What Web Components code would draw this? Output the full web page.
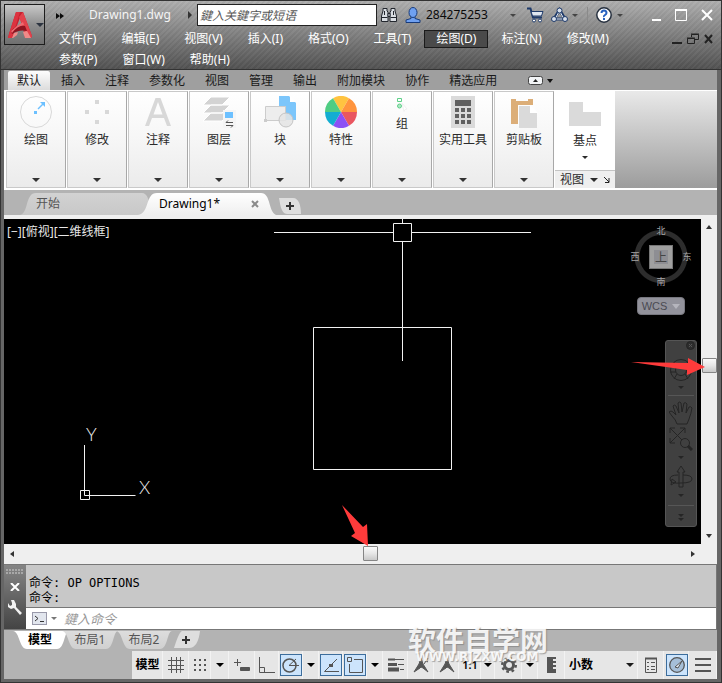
<!DOCTYPE html>
<html lang="zh-CN">
<head>
<meta charset="utf-8">
<title>Drawing1.dwg</title>
<style>
  html, body { margin: 0; height: 100%; background: #666; }
  body { font: 12px/16px "Noto Sans", "Noto Sans CJK SC", sans-serif; color: #1a1a1a; }
</style>
</head>
<body>
<cad-window></cad-window>
<script>
const RESET = `
  * { box-sizing: border-box; }
  button { font: inherit; color: inherit; background: none; border: 0; padding: 0; margin: 0; display: inline-flex; align-items: center; justify-content: center; }
  svg { display: block; flex: none; }
  .arrow { width: 0; height: 0; border: 4px solid transparent; border-top-color: currentColor; border-bottom: 0; }
`;

function define(name, css, html) {
  customElements.define(name, class extends HTMLElement {
    constructor() {
      super();
      const template = document.createElement('template');
      template.innerHTML = `<style>${RESET}${css}</style>${typeof html === 'function' ? html(this) : html}`;
      this.attachShadow({ mode: 'open' }).append(template.content.cloneNode(true));
    }
  });
}

/* ---------- title bar ---------- */
define('app-button', `
  :host { display: block; }
  button { width: 41px; height: 41px; border: 1px solid #1d1d1d; background: linear-gradient(#c8c8c8, #8f8f8f 50%, #6f6f6f); justify-content: flex-start; padding-left: 3px; gap: 3px; }
  .arrow { color: #2d3440; }
`, `<button aria-label="应用程序菜单">
  <svg width="25" height="28" viewBox="0 0 25 28">
    <path d="M8 1h7l9 24-1 2h-6l-1-6-4-14L6 22 4 27H0L1 23Z" fill="#c8202f"/>
    <path d="M8 1h4L4 27H0L1 23Z" fill="#dd3340"/>
    <path d="M15 1l9 24-1 2h-4L11 6Z" fill="#e2424c"/>
    <path d="M3 20q6-7 14-5l2 5q-8-2-15 3Z" fill="#8e1420"/>
    <path d="M3 20q5-5 12-9l1 3q-7 1-12 8Z" fill="#ef6a70"/>
    <path d="M4 27l2-5 4-1-1 3-4 3Zm13 0-2-6 4-1 4 7Z" fill="#f08a88"/>
  </svg><span class="arrow"></span></button>`);

define('quick-bar', `
  :host { display: flex; align-items: center; height: 22px; min-width: 0; color: #f4f4f4; }
  .more { width: 18px; margin: 2px 20px 0 4px; }
  h1 { font: 12px/20px "Noto Sans", sans-serif; margin: 0 auto 0 0; white-space: nowrap; }
  .search { display: flex; align-items: center; gap: 5px; }
  input { width: 180px; height: 22px; border: 1px solid #222; background: #fff; font: italic 12px/18px "Noto Sans", "Noto Sans CJK SC", sans-serif; padding: 0 2px; border-radius: 0; outline: 0; }
  input::placeholder { color: #555; opacity: 1; }
  .icon { width: 16px; height: 20px; }
  .find { margin-left: 4px; }
  .user { color: #0a0a0a; gap: 5px; margin: 0 11px 0 8px; width: 111px; justify-content: flex-start; }
  .user .arrow { margin-left: auto; }
  .arrow { border-width: 3px 3px 0; color: #444; }
  .group { display: flex; align-items: center; margin-left: 8px; }
  .drop { width: 15px; height: 20px; }
  .line { width: 1px; height: 16px; background: #8a8a8a; margin: 0 8px 0 5px; }
  .win { display: flex; gap: 13px; margin: 0 4px 0 25px; }
  .win button { width: 13px; height: 18px; }
  .win button:first-child { width: 9px; }
`, `<button class="more" aria-label="快速访问工具栏"><svg width="8" height="6"><path d="M0 0l4 3-4 3ZM4 0l4 3-4 3Z" fill="#0a0a0a"/></svg></button>
  <h1>Drawing1.dwg</h1>
  <div class="search"><svg width="4" height="8"><path d="M0 0l4 4-4 4Z" fill="#333"/></svg><input aria-label="搜索" placeholder="鍵入关鍵字或短语"></div>
  <button class="icon find" aria-label="查找"><svg width="16" height="16" viewBox="0 0 16 16" fill="#d9dde2" stroke="#23272e"><path d="M2 4V1.500h4V4l1 1v9.500H.5V9ZM14 4V1.500h-4V4L9 5v9.500h6.500V9Z"/><path d="M7 6.500h2v3H7ZM1 10.500h5.500M9.500 10.500h5.500M3.500 4v4M12.500 4v4"/></svg></button>
  <button class="user"><svg width="16" height="16" viewBox="0 0 16 16" fill="#6fa0f0" stroke="#173a7a"><path d="M6 9.500h4v2l5 1.500v2.500H1V13l5-1.500Z"/><ellipse cx="8" cy="5.500" rx="4" ry="5"/></svg><span>284275253</span><span class="arrow"></span></button>
  <button class="icon" aria-label="购物车"><svg width="17" height="16" viewBox="0 0 17 16" fill="none" stroke="#1e3a6a"><path d="M0 1.500h3.500l2.500 9h9" stroke-width="2"/><path d="M4 4.500h12l-1.500 4.500H5.500Z" fill="#dfe6f0"/><circle cx="7" cy="13.500" r="1.500" fill="#fff"/><circle cx="13" cy="13.500" r="1.500" fill="#fff"/></svg></button>
  <div class="group"><button class="icon" aria-label="共享"><svg width="17" height="16" viewBox="0 0 17 16" fill="#d8e0ec" stroke="#1e3a6a"><path d="M8.500 3 3 12h11Z" fill="none" stroke-width="3"/><path d="M8.500 4 4 12h9Z" fill="none" stroke="#e7ecf4"/><circle cx="8.500" cy="3.500" r="2.500"/><circle cx="3" cy="12" r="2.500"/><circle cx="14" cy="12" r="2.500"/></svg></button><button class="drop" aria-label="共享选项"><span class="arrow"></span></button><span class="line"></span><button class="icon" aria-label="帮助"><svg width="16" height="16" viewBox="0 0 16 16"><circle cx="8" cy="8" r="7.200" fill="#fff" stroke="#26303f" stroke-width="1.500"/><path d="M5.500 6q0-2.500 2.500-2.500T10.500 6q0 1-1.500 2T8 10M8 11v2" fill="none" stroke="#2862c0" stroke-width="2"/></svg></button><button class="drop" aria-label="帮助选项"><span class="arrow"></span></button></div>
  <div class="win"><button aria-label="最小化"><svg width="9" height="12"><path d="M0 10h9v2H0Z" fill="#fff"/></svg></button><button aria-label="最大化"><svg width="12" height="12"><path d="M.5 1h11v10.500H.5Z" fill="none" stroke="#fff"/><path d="M0 0h12v2H0Z" fill="#fff"/></svg></button><button aria-label="关闭"><svg width="12" height="12"><path d="M1 1l10 10M11 1 1 11" stroke="#fff" stroke-width="2"/></svg></button></div>`);

define('menu-bar', `
  :host { display: flex; align-items: flex-start; min-width: 0; color: #fff; }
  nav { display: flex; flex-wrap: wrap; flex: 1; gap: 3px 1px; padding-top: 2px; }
  nav button { height: 18px; padding: 0 11px; border: 1px solid transparent; white-space: nowrap; }
  nav button[aria-current] { background: #4a4a4a; border-color: #1b1b1b; }
  .mdi { display: flex; gap: 5px; padding: 4px 4px 0 0; }
  .mdi button { height: 14px; }
`, `<nav aria-label="菜单">${['文件(F)','编辑(E)','视图(V)','插入(I)','格式(O)','工具(T)','绘图(D)','标注(N)','修改(M)','参数(P)','窗口(W)','帮助(H)'].map(t => `<button${t[0] === '绘' ? ' aria-current="true"' : ''}>${t}</button>`).join('')}</nav>
  <div class="mdi"><button aria-label="最小化图形"><svg width="10" height="12"><path d="M0 9h10v2H0Z" fill="#222"/></svg></button><button aria-label="还原图形"><svg width="12" height="12" fill="none" stroke="#222"><path d="M4.500 4V1.500h7v5H8M4 1h8M.5 5.500h7v5h-7ZM0 5h8"/></svg></button><button aria-label="关闭图形"><svg width="9" height="12"><path d="M1 2l7 8M8 2 1 10" stroke="#222" stroke-width="2"/></svg></button></div>`);

define('title-bar', `
  :host { display: grid; grid-template-columns: 41px minmax(0, 1fr); column-gap: 2px; padding: 4px 4px 0 3px; min-height: 70px; border-bottom: 1px solid #333;
    background: linear-gradient(#333 0 1px, transparent 1px), repeating-linear-gradient(135deg, #ffffff08 0 2px, #00000008 2px 4px), linear-gradient(#b0b0b0, #808080 50%, #525252); }
  menu-bar { margin-top: 2px; }
`, `<app-button></app-button><div><quick-bar></quick-bar><menu-bar></menu-bar></div>`);

/* ---------- ribbon ---------- */
define('ribbon-tabs', `
  :host { display: flex; height: 20px; background: #9f9f9f; padding: 1px 0 0 4px; }
  button { padding: 0 10px; white-space: nowrap; height: 19px; }
  button[aria-selected=true] { background: linear-gradient(#fdfdfd, #dcdcdc); border-radius: 2px 2px 0 0; margin-right: 1px; padding: 0 9px; }
  .fold { margin-left: 21px; padding: 0; gap: 4px; color: #111; }
  .arrow { border-width: 4px 3px 0; }
`, `${['默认','插入','注释','参数化','视图','管理','输出','附加模块','协作','精选应用'].map((t, i) => `<button role="tab" aria-selected="${i === 0}">${t}</button>`).join('')}
  <button class="fold" aria-label="最小化功能区"><svg width="15" height="9"><rect x=".5" y=".5" width="14" height="8" rx="2" fill="#f2f4f6" stroke="#444"/><path d="M5 6l2.500-3L10 6Z" fill="#222"/></svg><span class="arrow"></span></button>`);

define('ribbon-panel', `
  :host { display: block; width: 60px; flex: none; }
  button { width: 100%; height: 97px; flex-direction: column; justify-content: flex-start; padding: 4px 0 5px; border: 1px solid #c9c9c9; border-right-color: #a8a8a8; background: linear-gradient(#fff, #f6f6f6 50%, #ebebeb); color: #2b2b2b; }
  .label { margin-top: 3px; white-space: nowrap; line-height: 18px; }
  .arrow { margin-top: auto; color: #333; }
`, el => `<button><slot></slot><span class="label">${el.getAttribute('label')}</span><span class="arrow"></span></button>`);

define('base-panel', `
  :host { display: flex; flex-direction: column; width: 60px; height: 97px; background: #fff; color: #2b2b2b; }
  .main { flex: 1; flex-direction: column; gap: 6px; }
  .main .arrow { border-width: 3px 3px 0; }
  .main .label { line-height: 18px; }
  .foot { height: 18px; background: #efefef; border-top: 1px solid #c4c4c4; justify-content: flex-start; padding-left: 5px; gap: 6px; }
`, `<button class="main"><svg width="32" height="24"><path d="M0 0h14v10h18v14H0Z" fill="#dadada"/></svg><span class="label">基点</span><span class="arrow"></span></button>
  <button class="foot"><span>视图</span><span class="arrow"></span><svg width="6" height="6"><path d="M0 0l5 5M5 1v4.500H1" stroke="#222" fill="none" /></svg></button>`);

define('ribbon-bar', `
  :host { display: flex; gap: 1px; height: 100px; padding: 1px 0 0 2px; background: #fff; overflow: hidden; }
  .rest { flex: 1; height: 97px; margin-left: -1px; background: linear-gradient(#e9e9e9, #9c9c9c); }
`, `
  <ribbon-panel label="绘图"><svg width="32" height="32"><circle cx="16" cy="16" r="15.500" fill="none" stroke="#d8d8d8"/><path d="M14 15h3v3h-3Z" fill="#6cc0ff"/><path d="M25 6v5l-5-5Z" fill="#6cc0ff"/><path d="M18 13l5-5" stroke="#6cc0ff" stroke-width="1.500"/></svg></ribbon-panel>
  <ribbon-panel label="修改"><svg width="32" height="32" fill="#d8d8d8"><path d="M14 4h4v4h-4ZM4 14h4v4H4ZM24 14h4v4h-4ZM14 24h4v4h-4Z"/></svg></ribbon-panel>
  <ribbon-panel label="注释"><svg width="32" height="32"><path d="M3 30 13.500 2h5L29 30h-4l-3-8H10l-3 8ZM11.500 18.500h9L16 6Z" fill="#d8d8d8" fill-rule="evenodd"/></svg></ribbon-panel>
  <ribbon-panel label="图层"><svg width="34" height="32"><path d="M9 1h19l-8 8H1ZM9 9h19l-8 8H1ZM9 17h19l-8 8H1Z" fill="#d3d3d3" stroke="#fff"/><rect x="21" y="14" width="13" height="18" fill="#f5f5f5"/><path d="M23 16h8v6h-8Z" fill="#6cc0ff"/><path d="M24 26.500h7M24 26.500l2-2M31 29.500h-7M31 29.500l-2 2" stroke="#555" fill="none"/></svg></ribbon-panel>
  <ribbon-panel label="块"><svg width="32" height="32"><path d="M15 0h10l7 7v17H15Z" fill="#7cc6fb"/><path d="M26 0v6h6Z" fill="#fff"/><path d="M1.500 10.500h20v14h-20Z" fill="#ededed" stroke="#ccc"/><circle cx="22" cy="24" r="7" fill="#e4e4e4" fill-opacity=".85" stroke="#c4c4c4"/><path d="M0 23h3v3H0Z" fill="#ccc"/></svg></ribbon-panel>
  <ribbon-panel label="特性"><svg width="32" height="32" viewBox="-16 -16 32 32"><path d="M0 0-8-13.860A16 16 0 0 1 8-13.860Z" fill="#ffc340"/><path d="M0 0 8-13.860A16 16 0 0 1 16 0Z" fill="#ff943d"/><path d="M0 0H16A16 16 0 0 1 8 13.860Z" fill="#e95660"/><path d="M0 0 8 13.860A16 16 0 0 1-8 13.860Z" fill="#8b50f5"/><path d="M0 0-8 13.860A16 16 0 0 1-16 0Z" fill="#13add1"/><path d="M0 0H-16A16 16 0 0 1-8-13.860Z" fill="#4fcd83"/></svg></ribbon-panel>
  <ribbon-panel label="组"><svg width="16" height="16" fill="none" stroke="#5fd089" stroke-width="1"><path d="M3.500 2.500h4v3h-4Z"/><circle cx="5.500" cy="10" r="2" fill="#aee8c4"/><path d="M8 7l5 6-2 .5-1 2Z" fill="#fff" stroke="#f0f0f0"/></svg></ribbon-panel>
  <ribbon-panel label="实用工具"><svg width="24" height="32"><path d="M0 0h24v32H0Z" fill="#dadada"/><path d="M4 4h16v6H4ZM4 12h4v4H4ZM10 12h4v4h-4ZM16 12h4v4h-4ZM4 18h4v4H4ZM10 18h4v4h-4ZM16 18h4v4h-4ZM4 24h4v4H4ZM10 24h4v4h-4ZM16 24h4v4h-4Z" fill="#606060"/></svg></ribbon-panel>
  <ribbon-panel label="剪贴板"><svg width="27" height="32"><path d="M0 3h22v25H0Z" fill="#dcae78"/><path d="M7 9h17v21H7ZM5 3h12v2H5ZM8 1h6v3H8Z" fill="#fdfdfd"/><path d="M8 10h11l7 7v15H8Z" fill="#dadada"/><path d="M19 9v8h8Z" fill="#fff"/></svg></ribbon-panel>
  <base-panel></base-panel><div class="rest"></div>`);

/* ---------- file tabs ---------- */
define('file-tabs', `
  :host { display: flex; align-items: flex-end; height: 29px; padding: 0 0 4px 16px; background: linear-gradient(#b3b3b3 0 25px, #efefef 25px); }
  button { height: 22px; justify-content: flex-start; color: #555; }
  .start { width: 130px; padding-left: 16px; background: linear-gradient(#d2d2d2, #c8c8c8); clip-path: path('M0 22C9 20 5 0 16 0H122Q130 0 130 22Z'); }
  .active { width: 138px; margin-left: -12px; padding-left: 21px; background: linear-gradient(#fff, #efefef); color: #000; clip-path: path('M0 22C12 20 7 0 19 0H123C133 0 130 18 138 22Z'); }
  .active svg { margin-left: auto; margin-right: 17px; }
  .add { width: 22px; height: 16px; margin: 0 0 1px 3px; justify-content: center; background: #dedede; clip-path: path('M0 0H14C20 0 22 8 22 16H8C2 16 1 5 0 0Z'); }
`, `<button class="start" role="tab">开始</button><button class="active" role="tab" aria-selected="true">Drawing1*<svg width="8" height="8"><path d="M1 1l6 6M7 1 1 7" stroke="#8b8b8b" stroke-width="2"/></svg></button><button class="add" aria-label="新图形"><svg width="8" height="8"><path d="M0 4h8M4 0v8" stroke="#333" stroke-width="2"/></svg></button>`);

/* ---------- drawing area ---------- */
define('view-cube', `
  :host { display: grid; grid-template: 12px 39px 12px / 12px 40px 12px; place-items: center; color: #a5a5a5; font: 9px/12px "Noto Sans CJK SC", sans-serif; background: radial-gradient(circle closest-side, transparent 0 21px, #2d2d2d 22px 26px, transparent 27px); }
  .n { grid-area: 1 / 2; } .w { grid-area: 2 / 1; } .e { grid-area: 2 / 3; } .s { grid-area: 3 / 2; }
  .top { grid-area: 2 / 2; width: 24px; height: 24px; border: 1px solid #777; background: linear-gradient(#8e8e93, #8e8e93) 50% / 14px 14px no-repeat #a0a0a0; color: #444; font-size: 12px; }
`, `<span class="n">北</span><span class="w">西</span><button class="top">上</button><span class="e">东</span><span class="s">南</span>`);

define('nav-bar', `
  :host { display: flex; flex-direction: column; align-items: center; width: 32px; height: 187px; border: 1px solid #555; border-radius: 3px; background: #404040; color: #252525; }
  button { width: 100%; }
  .arrow { border-width: 3px 3px 0; }
  hr { width: 26px; height: 1px; border: 0; background: #565656; margin: 4px 0; }
  .close { justify-content: flex-end; height: 10px; padding: 0 1px 0 0; }
  svg { fill: none; stroke: #252525; }
`, `<button class="close" aria-label="关闭导航栏"><svg width="9" height="9"><circle cx="4.500" cy="4.500" r="4" fill="#2d2d2d"/><path d="M3 3l3 3M6 3 3 6" stroke="#555"/></svg></button>
  <button aria-label="导航控制盘" style="height:34px;padding-top:4px"><svg width="24" height="24"><circle cx="12" cy="12" r="10.500"/><circle cx="12" cy="12" r="5.500"/><path d="M1 14h6M17 14h6M8 16l-3 5M16 16l3 5M8 8 5 4M16 8l3-4"/></svg></button>
  <button aria-label="控制盘选项" style="height:6px"><span class="arrow"></span></button><hr>
  <button aria-label="平移" style="height:26px"><svg width="24" height="24" viewBox="0 0 24 24"><path d="M8 23q-1-4-5-8l-3-4q2-2 4 0l3 3L4 5q1-2 3 0l3 7L9 2q2-2 3 0l1 9 2-9q2-1 3 1l-1 9 3-6q2-1 3 1-1 6-3 11l-2 5Z"/></svg></button>
  <button aria-label="范围缩放" style="height:27px"><svg width="24" height="24"><path d="M1 1l15 15M16 1 1 16M1 6V1h5M11 1h5v5M1 11v5h5"/><circle cx="16" cy="16" r="4.500" fill="#404040"/><path d="M19 19l4 4" stroke-width="3"/></svg></button>
  <button aria-label="缩放选项" style="height:11px"><span class="arrow"></span></button>
  <button aria-label="动态观察" style="height:27px"><svg width="24" height="24"><path d="M10 22V7H8l4-6 4 6h-2v15Z"/><path d="M9 10q-8 0-8 4 0 5 11 4 11 0 11-4t-9-4M2 20l5-3-4-3Z"/></svg></button>
  <button aria-label="动态观察选项" style="height:11px"><span class="arrow"></span></button><hr>
  <button aria-label="自定义" style="height:16px"><svg width="6" height="8"><path d="M0 0h6L3 3ZM0 4h6L3 7Z" fill="#252525" stroke="none"/></svg></button>`);

define('drawing-view', `
  :host { display: block; position: relative; background: #000; color: #e8e8e8; overflow: hidden; min-height: 320px; }
  .geometry { position: absolute; left: 0; top: 0; }
  .geometry text { font: 300 18px Lato, sans-serif; fill: #eee; }
  .controls { position: relative; padding: 5px 3px; font-size: 12px; line-height: 16px; }
  .side { position: absolute; right: 4px; top: 6px; display: flex; flex-direction: column; align-items: center; width: 72px; }
  .wcs { width: 48px; height: 18px; margin-top: 9px; gap: 5px; border: 1px solid #77777f; border-radius: 4px; background: #92929b; color: #4a4a52; font: 11px/14px "Liberation Sans", sans-serif; }
  .wcs .arrow { color: #b5b5bd; border-width: 5px 4px 0; }
  nav-bar { align-self: flex-end; margin-top: 25px; }
`, `<svg class="geometry" width="560" height="326" fill="none" stroke="#f2f2f2">
    <path d="M270 13.500h119M408 13.500h119M398.500 0v4M398.500 23v119M389.500 4.500h18v18h-18ZM309.500 108.500h138v142h-138Z"/>
    <path d="M80.500 226v50.500h51M76.500 271.500h9v9h-9Z"/>
    <text x="82" y="222" stroke="none">Y</text><text x="135" y="275" stroke="none">X</text>
  </svg>
  <div class="controls">[−][俯视][二维线框]</div>
  <div class="side"><view-cube></view-cube><button class="wcs">WCS<span class="arrow"></span></button><nav-bar></nav-bar></div>`);

define('scroll-track', `
  :host { display: flex; align-items: center; justify-content: space-between; background: #efefef; min-width: 0; min-height: 0; --first: 90deg; --last: -90deg; }
  :host([vertical]) { flex-direction: column; --first: 180deg; --last: 0deg; }
  button { width: 16px; height: 16px; color: #333; flex: none; }
  input { appearance: none; margin: 0; flex: 1; min-width: 0; height: 16px; background: transparent; }
  :host([vertical]) input { writing-mode: vertical-lr; width: 16px; min-height: 0; height: auto; }
  input::-webkit-slider-thumb { appearance: none; width: 15px; height: 15px; border: 1px solid #858585; border-radius: 1px; background: linear-gradient(#fafafa, #e6e6e6 50%, #c9c9c9); }
  .a { transform: rotate(var(--first)); } .b { transform: rotate(var(--last)); }
  .arrow { border-width: 4px 3px 0; }
`, el => `<button aria-label="向前滚动"><span class="arrow a"></span></button><input type="range" aria-label="滚动" min="0" max="1000" value="${el.getAttribute('at')}"><button aria-label="向后滚动"><span class="arrow b"></span></button>`);

define('drawing-frame', `
  :host { display: grid; flex: 1; grid-template: minmax(320px, 1fr) 19px / minmax(0, 1fr) 16px; background: #efefef; position: relative; border-bottom: 1px solid #efefef; }
  .note { position: absolute; pointer-events: none; fill: #ff3b3b; }
  .down { left: 338px; bottom: 17px; }
  .across { right: 12px; top: 139px; }
`, `<drawing-view></drawing-view><scroll-track vertical at="444"></scroll-track><scroll-track at="527"></scroll-track>
  <svg class="note down" width="28" height="41"><path d="M0 0 21 22 25 19 26 41 9 31 13 28Z"/></svg>
  <svg class="note across" width="74" height="18"><path d="M0 4 57 5V0L74 9 56 17v-5Z"/></svg>`);

/* ---------- command line ---------- */
define('command-line', `
  :host { display: grid; grid-template-columns: 22px minmax(0, 1fr); border: 1px solid #777; border-left: 0; }
  .grip { display: flex; flex-direction: column; align-items: center; background: linear-gradient(#858585, #444); padding-top: 4px; gap: 8px; }
  .log { height: 42px; padding: 11px 3px 0; background: #c8c8c8; font: 12px/15px "DejaVu Sans Mono", "Noto Sans CJK SC", monospace; color: #000; }
  .log div { white-space: pre; height: 15px; }
  form { display: flex; align-items: center; height: 22px; padding-left: 6px; background: #fff; border-top: 1px solid #777; gap: 4px; }
  .recent { gap: 4px; color: #777; } .arrow { border-width: 3px 3px 0; }
  input { flex: 1; min-width: 0; border: 0; outline: 0; padding: 0 3px; font: italic 13px/18px "Noto Sans", "Noto Sans CJK SC", sans-serif; height: 20px; }
  input::placeholder { color: #999; opacity: 1; }
`, `<div class="grip"><svg width="18" height="6" fill="#a8a8a8">${[0,1,2,3,4,5].map(i => `<path d="M${i * 3} 0h2v2h-2ZM${i * 3} 3h2v2h-2Z"/>`).join('')}</svg>
    <button aria-label="关闭命令行"><svg width="10" height="8"><path d="M1 0l8 8M9 0 1 8" stroke="#fff" stroke-width="2"/></svg></button>
    <button aria-label="自定义"><svg width="14" height="16" viewBox="0 0 14 16"><path d="M4 4v2L2 7 0 4v4l3 2 3-1 6 7 2-2-6-6V5L6 1H3Z" fill="#f2f2f2"/></svg></button></div>
  <div><div class="log"><div>命令: OP OPTIONS</div><div>命令:</div></div>
  <form><button type="button" class="recent" aria-label="近期使用的命令"><svg width="15" height="13"><rect x=".5" y=".5" width="14" height="12" fill="#e2e6ee" stroke="#99a"/><path d="M3 4l3 2.500L3 9M8 9.500h4" fill="none" stroke="#333"/></svg><span class="arrow"></span></button><input aria-label="命令" placeholder="鍵入命令"></form></div>`);

/* ---------- layout tabs and status bar ---------- */
define('layout-tabs', `
  :host { display: flex; align-items: flex-start; height: 21px; padding: 1px 0 0 9px; background: #b3b3b3; color: #555; }
  button { height: 18px; width: 56px; margin-right: -2px; background: linear-gradient(#ddd, #d0d0d0); clip-path: path('M0 0H56C51 0 52 18 44 18H14C6 18 7 1 0 0Z'); }
  .model { background: #fff; color: #000; font-weight: 700; width: 54px; margin-right: -5px; }
  .add { width: 28px; margin-left: 2px; background: #dedede; clip-path: path('M10 0H28Q26 17 17 17H2Q7 1 10 0Z'); }
`, `<button class="model" role="tab" aria-selected="true">模型</button><button role="tab">布局1</button><button role="tab">布局2</button><button class="add" aria-label="新建布局"><svg width="8" height="8"><path d="M0 4h8M4 0v8" stroke="#333" stroke-width="2"/></svg></button>`);

define('status-item', `
  :host { display: flex; align-items: center; justify-content: center; height: 28px; background: #e6e6e6; box-shadow: inset -1px 0 #f2f2f2; color: #000; flex: none; }
  button { width: 22px; height: 22px; border: 1px solid transparent; }
  button[aria-pressed=true] { background: #cce4fc; border-color: #3c6d9c; }
  :host([text]) button { width: auto; font-weight: 700; }
  :host([light]) button { font-weight: 600; font-size: 11px; height: 12px; line-height: 12px; }
`, el => `<button aria-label="${el.getAttribute('name')}" aria-pressed="${el.hasAttribute('on')}">${el.hasAttribute('menu') ? '<span class="arrow"></span>' : ''}<slot></slot></button>`);

define('status-bar', `
  :host { display: flex; justify-content: flex-end; background: #b3b3b3; height: 28px; }
  svg { fill: none; stroke: #555; }
  .units { display: flex; align-items: center; width: 73px; background: #e6e6e6; box-shadow: inset -1px 0 #f2f2f2; position: relative; }
  select { appearance: none; width: 100%; height: 22px; border: 0; background: none; font: 700 12px/18px "Noto Sans", "Noto Sans CJK SC", sans-serif; padding: 0 0 0 4px; color: #000; }
  .units .arrow { position: absolute; right: 4px; pointer-events: none; }
`, `
  <status-item text name="模型" style="width:31px">模型</status-item>
  <status-item name="栅格" style="width:26px"><svg width="16" height="16"><path d="M3.500 0v16M8.500 0v16M12.500 0v16M0 3.500h16M0 8.500h16M0 12.500h16"/></svg></status-item>
  <status-item name="捕捉" style="width:22px"><svg width="14" height="14"><path d="M1 2h14M1 7h14M1 12h14" stroke-width="2" stroke-dasharray="2 3"/></svg></status-item>
  <status-item menu name="捕捉选项" style="width:18px"></status-item>
  <status-item name="动态输入" style="width:26px"><svg width="16" height="14"><path d="M0 4.500h7M3.500 1v7"/><path d="M6.500 9.500h9v3h-9Z" fill="#555"/></svg></status-item>
  <status-item name="正交" style="width:24px"><svg width="16" height="16"><path d="M.5 0v15.500H16M.5 10.500h5v5"/></svg></status-item>
  <status-item on name="极轴追踪" style="width:24px"><svg width="18" height="16"><circle cx="7.500" cy="8.500" r="6.500" stroke-width="1.500"/><path d="M7 8.500h10M7 8.500 14 2"/></svg></status-item>
  <status-item menu name="极轴选项" style="width:16px"></status-item>
  <status-item on name="对象捕捉追踪" style="width:24px"><svg width="16" height="16"><path d="M14 2 1.500 14.500H16"/><path d="M6 7h4v3H6Z" fill="#555" stroke="none"/></svg></status-item>
  <status-item on name="对象捕捉" style="width:24px"><svg width="17" height="17"><path d="M.5 .5h4v4h-4ZM7 2.500h8.500v13h-13V7"/></svg></status-item>
  <status-item menu name="对象捕捉选项" style="width:16px"></status-item>
  <status-item name="线宽" style="width:25px"><svg width="16" height="14"><path d="M0 1.500h16M10 6.500h6M12 11.500h4"/><path d="M0 1.500h7" stroke-width="2"/><path d="M0 6.500h9" stroke-width="3"/><path d="M0 11.500h11" stroke-width="4"/></svg></status-item>
  <status-item name="注释可见性" style="width:26px"><svg width="16" height="16"><path d="M8 1 6 7 1 15l6-4 1-1 2 1 5 4-5-8Z" fill="#555"/><path d="M11 7l4-6M12 3l3 2"/></svg></status-item>
  <status-item name="自动缩放" style="width:25px"><svg width="16" height="16"><path d="M8 1 6 7 1 15l6-4 1-1 2 1 5 4-5-8Z" fill="#555"/></svg></status-item>
  <status-item text light name="注释比例 1:1" style="width:22px">1:1</status-item>
  <status-item menu name="比例选项" style="width:14px"></status-item>
  <status-item name="切换工作空间" style="width:27px"><svg width="16" height="16"><circle cx="8" cy="8" r="4.500" stroke-width="3"/><circle cx="8" cy="8" r="6.800" stroke-width="2.400" stroke-dasharray="2.670 2.670"/></svg></status-item>
  <status-item menu name="工作空间选项" style="width:16px"></status-item>
  <status-item name="单位" style="width:27px"><svg width="9" height="16"><path d="M0 0h9v2H6v2h3v2H6v2h3v2H6v2h3v4H0Z" fill="#555" stroke="none"/></svg></status-item>
  <label class="units"><select aria-label="图形单位"><option>小数</option></select><span class="arrow"></span></label>
  <status-item name="快捷特性" style="width:26px"><svg width="12" height="16"><path d="M.5 1.500h11v14H.5Z"/><path d="M0 1.500h12" stroke-width="2"/><path d="M2 5.500h2M2 9.500h2M2 12.500h2M6 5.500h4M6 9.500h4M6 12.500h4"/></svg></status-item>
  <status-item on name="硬件加速" style="width:25px"><svg width="16" height="16"><circle cx="8" cy="8" r="7.300" fill="#a6bfd8" stroke-width="1.300"/><path d="M6 10 13 4 9 11Z" fill="#e8f0f8" stroke-width="1"/></svg></status-item>
  <status-item name="自定义" style="width:28px"><svg width="16" height="14"><path d="M0 1h16M0 7h16M0 13h16" stroke-width="2"/></svg></status-item>`);

define('site-mark', `
  :host { position: absolute; right: 175px; bottom: 20px; width: 138px; color: #ffffffe0; text-align: center; pointer-events: none; white-space: nowrap; text-shadow: 1px 1px 1px #7779; }
  .name { font: 700 28px/26px "Noto Sans CJK SC", sans-serif; }
  .url { font: 700 12px/10px "DejaVu Sans", sans-serif; }
`, `<div class="name">软件自学网</div><div class="url">WWW.RJZXW.COM</div>`);

define('cad-window', `
  :host { display: flex; flex-direction: column; position: relative; min-height: 100vh; min-width: 700px; box-sizing: border-box; background: #666; border: solid #333; border-width: 0 1px 1px; color: #1a1a1a; }
  .body { display: flex; flex-direction: column; flex: 1; margin: 0 4px 3px 3px; }
`, `<title-bar></title-bar>
  <div class="body"><ribbon-tabs></ribbon-tabs><ribbon-bar></ribbon-bar><file-tabs></file-tabs><drawing-frame></drawing-frame><command-line></command-line><layout-tabs></layout-tabs><status-bar></status-bar></div>
  <site-mark></site-mark>`);
</script>
</body>
</html>
